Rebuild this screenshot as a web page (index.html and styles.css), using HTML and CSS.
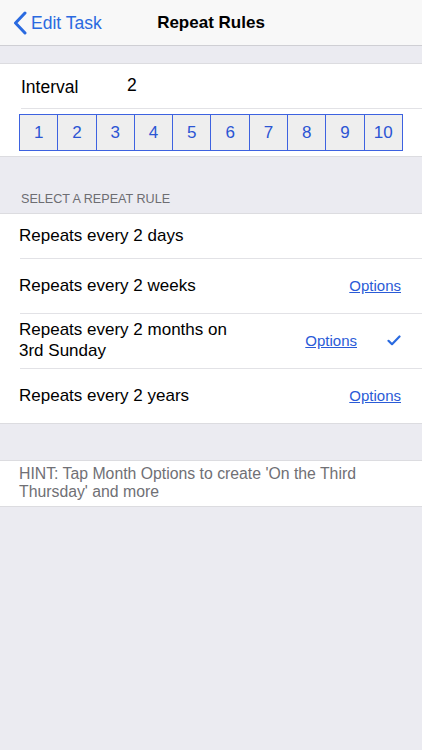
FILE: index.html
```html
<html lang="en"><head><meta charset="utf8">
    <title>Repeat Rules</title>
    <meta name="viewport" content="width=device-width, user-scalable=no, maximum-scale=1.0">
    <link rel="stylesheet" href="styles.css">
    </head><body>
    <div class="navbar">
        <a class="back" href="#">
            <svg class="chevron" width="14" height="24" viewBox="0 0 14 24"><path d="M12 2 L2.5 12 L12 22" fill="none" stroke="#2a6ae0" stroke-width="3" stroke-linecap="round" stroke-linejoin="round"/></svg>
            Edit Task
        </a>
        <h1>Repeat Rules</h1>
    </div>

    <div class="gap"></div>

    <div class="group">
        <div class="interval">
            <span class="label">Interval</span>
            <span class="value">2</span>
        </div>
        <div class="picker">
            <span>1</span><span>2</span><span>3</span><span>4</span><span>5</span><span>6</span><span>7</span><span>8</span><span>9</span><span>10</span>
        </div>
    </div>

    <div class="header">SELECT A REPEAT RULE</div>

    <ul class="group rules">
        <li class="short"><span class="text">Repeats every 2 days</span></li>
        <li><span class="text">Repeats every 2 weeks</span><a href="#">Options</a></li>
        <li class="selected"><span class="text">Repeats every 2 months on<br>3rd Sunday</span><a href="#">Options</a>
            <svg class="check" width="14" height="11" viewBox="0 0 14 11"><path d="M1.5 5.8 L5 9.2 L12.5 1.5" fill="none" stroke="#2a6ae0" stroke-width="2.2" stroke-linecap="round" stroke-linejoin="round"/></svg>
        </li>
        <li><span class="text">Repeats every 2 years</span><a href="#">Options</a></li>
    </ul>

    <div class="gap tall"></div>

    <p class="hint">HINT: Tap Month Options to create 'On the Third Thursday' and more</p>
    </body></html>
```

FILE: styles.css
```css
body {
    margin: 0;
    background: #ebebf1;
    font-family: "Liberation Sans", Arial, sans-serif;
    color: #000;
}

.navbar {
    position: relative;
    height: 45px;
    background: #f8f8f8;
    border-bottom: 1px solid #cfcfd4;
    display: flex;
    align-items: center;
    justify-content: center;
}
.navbar h1 {
    margin: 0;
    font-size: 17px;
    font-weight: bold;
}
.back {
    position: absolute;
    left: 13px;
    top: 11px;
    display: flex;
    align-items: center;
    gap: 4px;
    color: #2a6ae0;
    text-decoration: none;
    font-size: 17.5px;
}

.gap {
    height: 17px;
}
.gap.tall {
    height: 36px;
}

.group {
    background: #fff;
    border-top: 1px solid #dcdce0;
    border-bottom: 1px solid #dcdce0;
}

.interval {
    display: flex;
    align-items: center;
    height: 44px;
    margin-left: 21px;
    border-bottom: 1px solid #e2e2e6;
    font-size: 17.5px;
}
.interval .label {
    width: 106px;
    margin-top: 3px;
}
.interval .value {
    margin-top: -1px;
}

.picker {
    display: flex;
    margin: 5px 19px 5px 19px;
    border: 1px solid #3d62e0;
    width: 382px;
}
.picker span {
    flex: 1;
    height: 35px;
    line-height: 35px;
    text-align: center;
    background: #eeeeee;
    color: #2b55d4;
    font-size: 17px;
    border-left: 1px solid #3d62e0;
}
.picker span:first-child {
    border-left: none;
}

.header {
    padding: 35px 21px 7px;
    font-size: 12.6px;
    color: #6d6d72;
}

.rules {
    list-style: none;
    margin: 0;
    padding: 0;
}
.rules li {
    display: flex;
    align-items: center;
    height: 54px;
    margin-left: 20px;
    padding-right: 21px;
    border-bottom: 1px solid #e2e2e6;
    font-size: 17px;
}
.rules li:last-child {
    border-bottom: none;
}
.rules li.short {
    height: 44px;
}
.rules li > * {
    margin-top: -2px;
}
.rules .text {
    flex: 1;
    margin-left: -1px;
    line-height: 21px;
}
.rules a {
    color: #2a5bd7;
    font-size: 15px;
    text-decoration: underline;
}
.rules .selected a {
    margin-right: 30px;
}

.hint {
    margin: 0;
    background: #fff;
    padding: 4px 20px 5px 19px;
    font-size: 15.8px;
    line-height: 18px;
    color: #707075;
    border-top: 1px solid #dcdce0;
    border-bottom: 1px solid #dcdce0;
}
```
